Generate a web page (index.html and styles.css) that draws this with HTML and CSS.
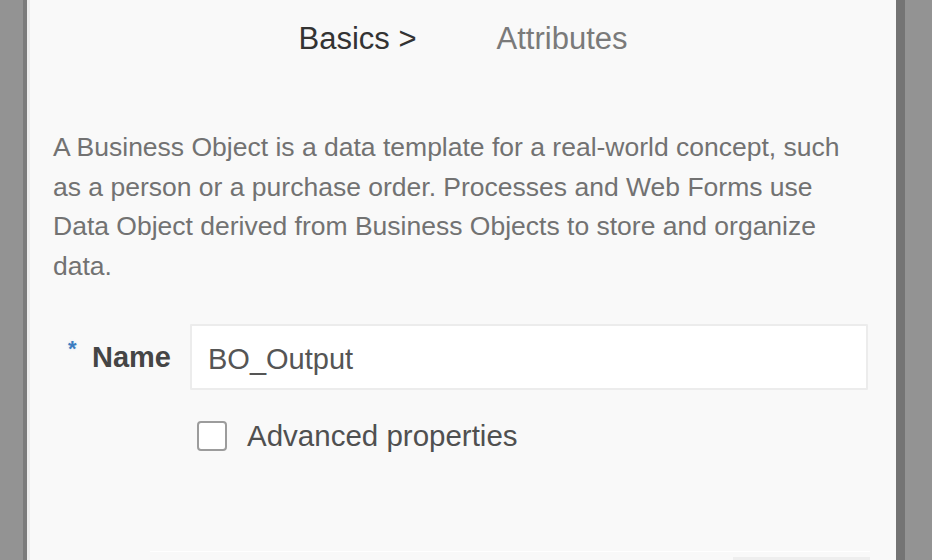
FILE: index.html
```html
<!DOCTYPE html>
<html lang="en">
<head>
<meta charset="utf-8">
<title>Business Object</title>
<link rel="stylesheet" href="styles.css">
</head>
<body>
<div class="frame">
  <div class="dialog">
    <nav class="tabs">
      <span class="tab tab-active">Basics &gt;</span>
      <span class="tab">Attributes</span>
    </nav>
    <p class="intro">A Business Object is a data template for a real-world concept, such as a person or a purchase order. Processes and Web Forms use Data Object derived from Business Objects to store and organize data.</p>
    <div class="field-row">
      <label class="field-label" for="bo-name"><span class="req">*</span>Name</label>
      <input class="text-input" id="bo-name" type="text" value="BO_Output">
    </div>
    <div class="check-row">
      <span class="checkbox"></span>
      <span class="check-label">Advanced properties</span>
    </div>
    <div class="footer">
      <span class="btn-hint"></span>
    </div>
  </div>
</div>
</body>
</html>
```

FILE: styles.css
```css
html, body {
  margin: 0;
  padding: 0;
  height: 560px;
  overflow: hidden;
}
body {
  background: #939393;
  font-family: "Liberation Sans", Arial, sans-serif;
}
.frame {
  margin-left: 23px;
  width: 869px;
  height: 560px;
  border-left: 4px solid #7b7b7b;
  border-right: 9px solid #747474;
}
.dialog {
  box-sizing: border-box;
  height: 560px;
  background: #f9f9f9;
  border-left: 3px solid #ececec;
  padding: 21px 0 0 23px;
  display: flex;
  flex-direction: column;
}
.tabs {
  display: flex;
  justify-content: center;
  gap: 80px;
  padding-right: 23px;
  font-size: 31px;
  line-height: 36px;
}
.tab {
  color: #7a7a7a;
}
.tab-active {
  color: #333;
}
.intro {
  margin: 71px 0 0 0;
  width: 810px;
  font-size: 26.5px;
  line-height: 39.5px;
  color: #727272;
}
.field-row {
  display: flex;
  align-items: center;
  margin-top: 38px;
  margin-left: 15px;
}
.field-label {
  display: flex;
  align-items: flex-start;
  font-size: 29px;
  font-weight: bold;
  color: #454545;
  width: 122px;
}
.req {
  color: #3b7cc0;
  font-size: 22px;
  line-height: 22px;
  width: 24px;
  margin-top: -3px;
  text-shadow: 0 0 3px #d9e8f6;
}
.text-input {
  box-sizing: border-box;
  width: 678px;
  height: 66px;
  margin: 0;
  padding: 4px 16px 0;
  border: 2px solid #ececec;
  border-radius: 1px;
  background: #fff;
  font-family: "Liberation Sans", Arial, sans-serif;
  font-size: 29px;
  color: #555;
  outline: none;
}
.check-row {
  display: flex;
  align-items: center;
  gap: 20px;
  margin-top: 29px;
  margin-left: 144px;
}
.checkbox {
  box-sizing: border-box;
  width: 30px;
  height: 30px;
  border: 2px solid #9c9c9c;
  border-radius: 4px;
  background: #fff;
}
.check-label {
  font-size: 29.5px;
  line-height: 34px;
  color: #505050;
}
.footer {
  margin-top: auto;
  margin-left: 97px;
  width: 720px;
  height: 8px;
  border-top: 1px solid #ffffff;
  display: flex;
  justify-content: flex-end;
  align-items: flex-end;
}
.btn-hint {
  width: 137px;
  height: 3px;
  background: #eeeeee;
}
```
